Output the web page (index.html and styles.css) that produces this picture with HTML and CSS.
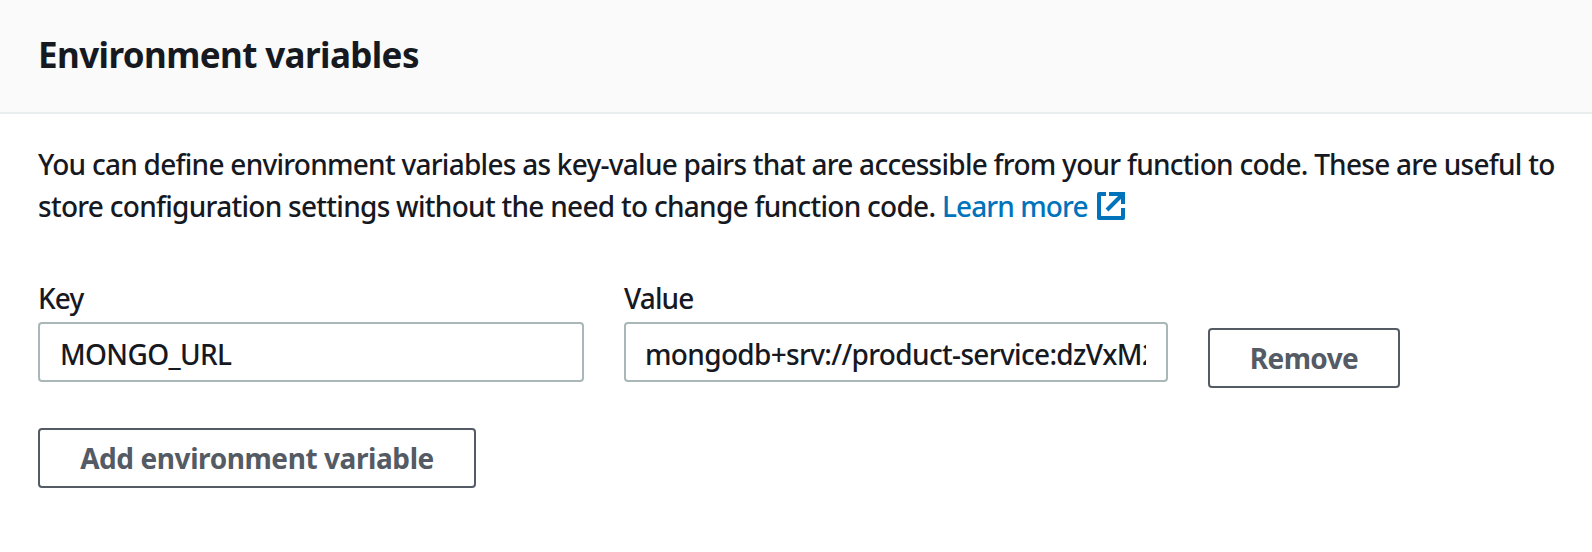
FILE: index.html
```html
<!DOCTYPE html>
<html lang="en"><head><meta charset="utf-8"><title>Environment variables</title><link rel="stylesheet" href="styles.css"></head>
<body>
<header class="header"><h2 class="title">Environment variables</h2></header>
<main class="content">
<p class="description"><span class="line-one">You can define environment variables as key-value pairs that are accessible from your function code. These are useful to</span><br><span class="line-two">store configuration settings without the need to change function code.</span> <a class="link"><span class="link-text">Learn more</span><svg class="external" viewBox="0 0 28 28"><path d="M9 2H2v24h24V16M12 2h14v10M25 3 10 18" fill="none" stroke="currentColor" stroke-width="4" stroke-linejoin="round"/><path d="M20 0h8v8z" fill="currentColor"/></svg></a></p>
<div class="row">
<label class="field field-key"><span class="label">Key</span><span class="input"><span class="value">MONGO_URL</span></span></label>
<label class="field field-value"><span class="label">Value</span><span class="input"><span class="value value-url">mongodb+srv://product-service:dzVxM2</span></span></label>
<button class="button remove">Remove</button>
</div>
<button class="button add">Add environment variable</button>
</main>
</body></html>
```

FILE: styles.css
```css
* { box-sizing: border-box; }
body { margin: 0; background: #fff; color: #16191f; font: 500 28px/42px "Noto Sans", sans-serif; }
.header { height: 114px; padding: 33px 38px; background: #fafafa; border-bottom: 2px solid #eaeded; }
.title { margin: 0; font-size: 35px; line-height: 44px; font-weight: 700; letter-spacing: -.6px; }
.content { padding: 29px 38px 0; }
.description { margin: 0; height: 84px; white-space: nowrap; letter-spacing: -.74px; }
.line-two { letter-spacing: -.72px; }
.link { color: #0073bb; letter-spacing: -.9px; }
.external { width: 28px; height: 28px; margin-left: 9px; vertical-align: -3px; }
.row { display: flex; margin-top: 50px; gap: 40px; align-items: flex-start; }
.field { display: block; width: 546px; }
.field-value { width: 544px; }
.label { display: block; height: 45px; letter-spacing: -.9px; }
.input { display: block; height: 60px; border: 2px solid #aab7b8; border-radius: 4px; padding: 9px 20px 0; overflow: hidden; }
.value { display: block; overflow: hidden; white-space: nowrap; letter-spacing: -.65px; }
.value-url { letter-spacing: -.66px; margin-left: -1px; }
.button { display: block; height: 60px; border: 2px solid #545b64; border-radius: 4px; padding: 0; background: #fff; color: #545b64; font: 700 28px/42px "Noto Sans", sans-serif; letter-spacing: -.42px; }
.remove { width: 192px; margin-top: 51px; letter-spacing: -.6px; }
.add { width: 438px; margin-top: 40px; }
```
